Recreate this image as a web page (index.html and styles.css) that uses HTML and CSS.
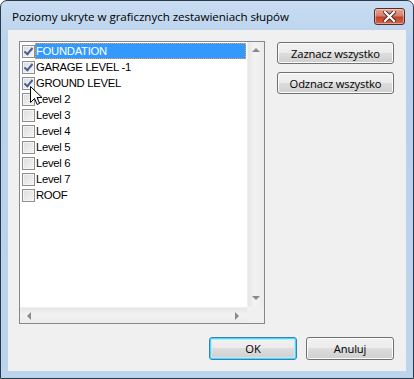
FILE: index.html
```html
<!DOCTYPE html>
<html lang="pl">
<head>
    <meta charset="UTF-8">
    <title>Poziomy ukryte w graficznych zestawieniach słupów</title>
    <link rel="stylesheet" href="styles.css">
</head>
<body>

<div class="window">
    <div class="titlebar">
        <span class="title">Poziomy ukryte w graficznych zestawieniach słupów</span>
        <button class="close-btn" aria-label="Zamknij">
            <svg width="13" height="11" viewBox="0 0 13 11">
                <path d="M2 1 L11 10 M11 1 L2 10" stroke="#4a2420" stroke-width="4" stroke-linecap="square"/>
                <path d="M2 1 L11 10 M11 1 L2 10" stroke="#ffffff" stroke-width="2.2" stroke-linecap="square"/>
            </svg>
        </button>
    </div>

    <div class="client">
        <div class="top-row">
            <div class="listbox">
                <div class="list-main">
                    <ul class="level-list">
                        <li class="checked selected"><span class="box"></span><span class="label">FOUNDATION</span></li>
                        <li class="checked"><span class="box"></span><span class="label">GARAGE LEVEL -1</span></li>
                        <li class="checked"><span class="box"></span><span class="label">GROUND LEVEL</span></li>
                        <li><span class="box"></span><span class="label">Level 2</span></li>
                        <li><span class="box"></span><span class="label">Level 3</span></li>
                        <li><span class="box"></span><span class="label">Level 4</span></li>
                        <li><span class="box"></span><span class="label">Level 5</span></li>
                        <li><span class="box"></span><span class="label">Level 6</span></li>
                        <li><span class="box"></span><span class="label">Level 7</span></li>
                        <li><span class="box"></span><span class="label">ROOF</span></li>
                    </ul>
                    <div class="vscroll">
                        <span class="arrow up"></span>
                        <span class="arrow down"></span>
                    </div>
                </div>
                <div class="hscroll">
                    <div class="hbar">
                        <span class="arrow left"></span>
                        <span class="arrow right"></span>
                    </div>
                    <div class="corner"></div>
                </div>
            </div>

            <div class="side-buttons">
                <button class="btn">Zaznacz wszystko</button>
                <button class="btn">Odznacz wszystko</button>
            </div>
        </div>

        <div class="footer">
            <button class="btn btn-wide default">OK</button>
            <button class="btn btn-wide">Anuluj</button>
        </div>
    </div>

    <svg class="cursor" width="13" height="20" viewBox="0 0 13 20">
        <path d="M0.5 0.5 L0.5 16.5 L4.5 12.5 L7.2 18.5 L9.6 17.4 L7 11.5 L12 11.5 Z" fill="#ffffff" stroke="#000000" stroke-width="1"/>
    </svg>
</div>

</body>
</html>
```

FILE: styles.css
```css
body {
    margin: 0;
    padding: 0;
    background-color: #ffffff;
}
.window {
    position: relative;
    width: 414px;
    height: 379px;
    box-sizing: border-box;
    border: 1px solid #2b3a4a;
    border-radius: 7px 7px 0 0;
    background: linear-gradient(#c9ddf2, #b9d2ec 40px, #bcd4ec);
    padding: 0 7px 7px 7px;
    display: flex;
    flex-direction: column;
    font-family: "Open Sans", "Noto Sans", sans-serif;
}
.titlebar {
    height: 29px;
    display: flex;
    align-items: center;
    justify-content: space-between;
}
.title {
    font-size: 11.6px;
    color: #000000;
    margin-left: 4px;
    margin-top: 1px;
    letter-spacing: -0.05px;
}
.close-btn {
    width: 31px;
    height: 17px;
    margin-right: 1px;
    margin-top: 2px;
    padding: 0;
    border: 1px solid #5c2a26;
    border-radius: 3px;
    background: linear-gradient(#e8a493, #d5806d 45%, #c1432b 55%, #d0654a);
    box-shadow: inset 0 0 0 1px rgba(255, 255, 255, 0.4);
    display: flex;
    align-items: center;
    justify-content: center;
}
.client {
    flex: 1;
    background-color: #f0f0f0;
    padding: 11px 12px 0 11px;
    display: flex;
    flex-direction: column;
}
.top-row {
    display: flex;
    gap: 12px;
}
.listbox {
    width: 246px;
    height: 283px;
    box-sizing: border-box;
    border: 1px solid #828790;
    background-color: #ffffff;
    display: flex;
    flex-direction: column;
}
.list-main {
    flex: 1;
    display: flex;
}
.level-list {
    flex: 1;
    list-style: none;
    margin: 0;
    padding: 1px 0 0 0;
    font-family: "Liberation Sans", Arial, sans-serif;
    font-size: 11.3px;
    color: #000000;
}
.level-list li {
    height: 16px;
    display: flex;
    align-items: center;
}
.box {
    width: 11px;
    height: 11px;
    margin-left: 2px;
    border: 1px solid #8f8f8f;
    background: linear-gradient(135deg, #dcdcdc, #f6f6f6);
    box-shadow: inset 0 0 0 1px #f4f4f4;
    position: relative;
    flex-shrink: 0;
}
.checked .box::after {
    content: "";
    position: absolute;
    left: 3px;
    top: 0px;
    width: 3px;
    height: 7px;
    border: solid #4a5f97;
    border-width: 0 2px 2px 0;
    transform: rotate(40deg);
}
.label {
    height: 16px;
    line-height: 16px;
    padding-left: 1px;
    box-sizing: border-box;
    letter-spacing: -0.3px;
}
.selected .label {
    flex: 1;
    margin-right: 1px;
    background-color: #3399ff;
    color: #ffffff;
    border: 1px dotted #f0a040;
    line-height: 14px;
    padding-left: 0;
}
.vscroll {
    width: 16px;
    background: linear-gradient(90deg, #e6e6e6, #f2f2f2 40%, #ececec);
    border-left: 1px solid #efefef;
    display: flex;
    flex-direction: column;
    justify-content: space-between;
    align-items: center;
    padding: 6px 0 7px 0;
}
.hscroll {
    height: 16px;
    display: flex;
}
.hbar {
    flex: 1;
    background: linear-gradient(#e6e6e6, #f2f2f2 40%, #ececec);
    border-top: 1px solid #efefef;
    display: flex;
    justify-content: space-between;
    align-items: center;
    padding: 0 8px 0 7px;
}
.corner {
    width: 17px;
    background-color: #f0f0f0;
}
.arrow {
    width: 0;
    height: 0;
    border: 4px solid transparent;
}
.arrow.up {
    border-bottom-color: #8a8a8a;
    border-top-width: 0;
}
.arrow.down {
    border-top-color: #8a8a8a;
    border-bottom-width: 0;
}
.arrow.left {
    border-right-color: #8a8a8a;
    border-left-width: 0;
}
.arrow.right {
    border-left-color: #8a8a8a;
    border-right-width: 0;
}
.side-buttons {
    display: flex;
    flex-direction: column;
    gap: 8px;
    margin-top: 1px;
}
.btn {
    width: 117px;
    height: 22px;
    padding: 0;
    border: 1px solid #707070;
    border-radius: 3px;
    background: linear-gradient(#f2f2f2, #ebebeb 50%, #dddddd 50%, #cfcfcf);
    box-shadow: inset 0 0 0 1px #fcfcfc;
    font-family: "Open Sans", "Noto Sans", sans-serif;
    font-size: 11.2px;
    color: #000000;
    letter-spacing: -0.15px;
}
.footer {
    display: flex;
    justify-content: flex-end;
    gap: 9px;
    margin-top: 13px;
}
.btn-wide {
    width: 88px;
    height: 23px;
}
.default {
    border-color: #3c7fb1;
    box-shadow: inset 0 0 0 1px #48d8fb, inset 0 0 0 2px #b8ecfb;
}
.cursor {
    position: absolute;
    left: 29px;
    top: 85px;
}
```
